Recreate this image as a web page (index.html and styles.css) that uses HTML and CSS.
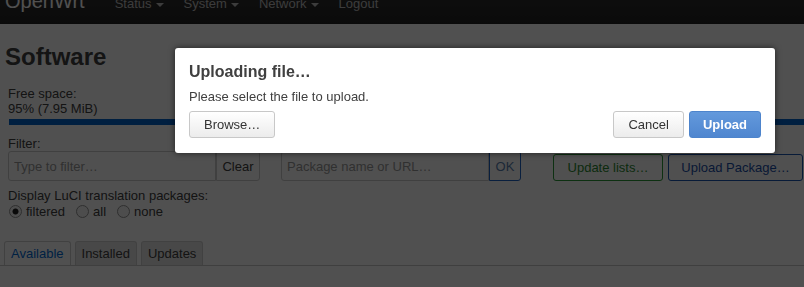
FILE: index.html
```html
<!DOCTYPE html>
<html lang="en">
<head>
<meta charset="utf-8">
<title>Software - OpenWrt</title>
<link rel="stylesheet" href="styles.css">
</head>
<body>
<header class="topbar">
  <span class="brand">OpenWrt</span>
  <ul class="nav">
    <li><a class="nav-link">Status<span class="caret"></span></a></li>
    <li><a class="nav-link">System<span class="caret"></span></a></li>
    <li><a class="nav-link">Network<span class="caret"></span></a></li>
    <li><a class="nav-link">Logout</a></li>
  </ul>
</header>
<main class="page">
  <h2 class="title">Software</h2>
  <div class="freespace">
    <div>Free space:</div>
    <div>95% (7.95 MiB)</div>
    <div class="progress"></div>
  </div>
  <div class="controls">
    <div class="field field-filter">
      <label class="field-label">Filter:</label>
      <div class="group">
        <input class="text-input" type="text" placeholder="Type to filter…">
        <button class="addon">Clear</button>
      </div>
    </div>
    <div class="field field-pkg">
      <label class="field-label">Download and install package:</label>
      <div class="group">
        <input class="text-input" type="text" placeholder="Package name or URL…">
        <button class="addon addon-ok">OK</button>
      </div>
    </div>
    <button class="action action-update">Update lists…</button>
    <button class="action action-upload">Upload Package…</button>
  </div>
  <div class="luci-label">Display LuCI translation packages:</div>
  <div class="radios">
    <input class="radio" type="radio" name="luci" checked><span class="radio-label">filtered</span>
    <input class="radio" type="radio" name="luci"><span class="radio-label">all</span>
    <input class="radio" type="radio" name="luci"><span class="radio-label">none</span>
  </div>
  <ul class="tabs">
    <li class="tab tab-active">Available</li>
    <li class="tab">Installed</li>
    <li class="tab">Updates</li>
  </ul>
</main>
<div class="backdrop"></div>
<div class="modal">
  <h4 class="modal-title">Uploading file…</h4>
  <p class="modal-text">Please select the file to upload.</p>
  <div class="modal-actions">
    <button class="btn">Browse…</button>
    <span class="spacer"></span>
    <button class="btn">Cancel</button>
    <button class="btn btn-primary">Upload</button>
  </div>
</div>
</body>
</html>
```
FILE: styles.css
```css
body {
  margin: 0;
  font-family: "Liberation Sans", Arial, sans-serif;
  font-size: 13px;
  color: #404040;
  background: #fff;
  overflow: hidden;
}

.topbar {
  display: flex;
  align-items: flex-start;
  height: 40px;
  margin-top: -16px;
  background: linear-gradient(#333, #222);
}

.brand {
  margin-left: 5px;
  font-size: 20px;
  line-height: 35px;
  color: #fff;
}

.nav {
  display: flex;
  list-style: none;
  margin: 0 0 0 20px;
  padding: 0;
}

.nav-link {
  display: block;
  padding: 0 10px;
  line-height: 40px;
  font-size: 13px;
  color: #bfbfbf;
}

.caret {
  display: inline-block;
  margin-left: 4px;
  width: 0;
  height: 0;
  border-top: 4px solid #bfbfbf;
  border-left: 4px solid transparent;
  border-right: 4px solid transparent;
  vertical-align: middle;
}

.page {
  padding: 0 0 0 8px;
}

.title {
  margin: 19px 0 15px -3px;
  font-size: 24px;
  line-height: 28px;
  font-weight: bold;
  color: #404040;
}

.freespace {
  line-height: 15px;
}

.progress {
  margin: 3px 0 0 1px;
  height: 6px;
  background: #0062cc;
}

.controls {
  display: flex;
  align-items: flex-end;
  margin-top: 11px;
}

.field {
  display: flex;
  flex-direction: column;
}

.field-label {
  line-height: 15px;
  white-space: nowrap;
}

.field-filter {
  width: 252px;
}

.field-pkg {
  width: 240px;
  margin-left: 21px;
}

.group {
  display: flex;
  height: 30px;
}

.text-input {
  flex: 1;
  min-width: 0;
  height: 30px;
  box-sizing: border-box;
  margin: 0;
  padding: 0 5px;
  border: 1px solid #ccc;
  border-radius: 3px 0 0 3px;
  font: inherit;
  color: #404040;
  background: #fff;
}

.text-input::placeholder {
  color: #999;
}

.addon {
  flex: none;
  width: 44px;
  height: 30px;
  box-sizing: border-box;
  margin: 0;
  padding: 0;
  border: 1px solid #ccc;
  border-left-color: #ccc;
  border-radius: 0 3px 3px 0;
  background: #fff;
  font: inherit;
  color: #404040;
}

.addon-ok {
  width: 32px;
  border-color: #1f63c4;
  color: #5a7fb0;
}

.action {
  flex: none;
  height: 27px;
  box-sizing: border-box;
  margin: 0;
  padding: 0;
  border-radius: 3px;
  background: #fff;
  font: inherit;
  white-space: nowrap;
}

.action-update {
  width: 110px;
  margin-left: 32px;
  border: 1px solid #2c9a37;
  color: #2c8a30;
}

.action-upload {
  width: 135px;
  margin-left: 5px;
  border: 1px solid #1a56b4;
  color: #1a4fa8;
}

.luci-label {
  margin-top: 7px;
  line-height: 15px;
}

.radios {
  display: flex;
  align-items: center;
  height: 15px;
  margin-top: 1px;
  line-height: 15px;
}

.radio {
  appearance: none;
  -webkit-appearance: none;
  flex: none;
  width: 13px;
  height: 13px;
  box-sizing: border-box;
  margin: 0 4px 0 1px;
  border: 1px solid #959595;
  border-radius: 50%;
  background: #f4f4f4;
}

.radio:checked {
  background: radial-gradient(circle, #222 0, #222 2.6px, #f4f4f4 3.4px);
}

.radio-label {
  margin-right: 10px;
}

.tabs {
  display: flex;
  list-style: none;
  margin: 22px 0 0 -8px;
  padding: 0 0 0 4px;
  border-bottom: 1px solid #c8c8c8;
}

.tab {
  height: 24px;
  box-sizing: border-box;
  margin-right: 4px;
  padding: 0 6px;
  line-height: 23px;
  border: 1px solid #d0d0d0;
  border-bottom: none;
  border-radius: 3px 3px 0 0;
  background: #e6e6e6;
  color: #404040;
}

.tab-active {
  background: #fff;
  color: #0069d6;
}

.backdrop {
  position: fixed;
  inset: 0;
  background: rgba(0, 0, 0, 0.686);
}

.modal {
  position: absolute;
  left: 175px;
  top: 48px;
  width: 600px;
  box-sizing: border-box;
  padding: 14px 14px 15px;
  background: #fff;
  border-radius: 3px;
  box-shadow: 0 0 6px rgba(0, 0, 0, 0.6);
}

.modal-title {
  margin: 0 0 7px;
  font-size: 16px;
  line-height: 20px;
  font-weight: bold;
  color: #404040;
}

.modal-text {
  margin: 0 0 7px;
  line-height: 15px;
  color: #404040;
}

.modal-actions {
  display: flex;
}

.spacer {
  flex: 1;
}

.btn {
  height: 27px;
  box-sizing: border-box;
  margin: 0;
  padding: 0 14px;
  border: 1px solid #c8c8c8;
  border-radius: 3px;
  background: linear-gradient(#fff, #ececec);
  font: inherit;
  line-height: 25px;
  color: #333;
}

.btn-primary {
  margin-left: 5px;
  padding: 0 13px;
  border-color: #4d84cc;
  background: linear-gradient(#6399dc, #4f86cf);
  color: #fff;
  font-weight: bold;
}
```
